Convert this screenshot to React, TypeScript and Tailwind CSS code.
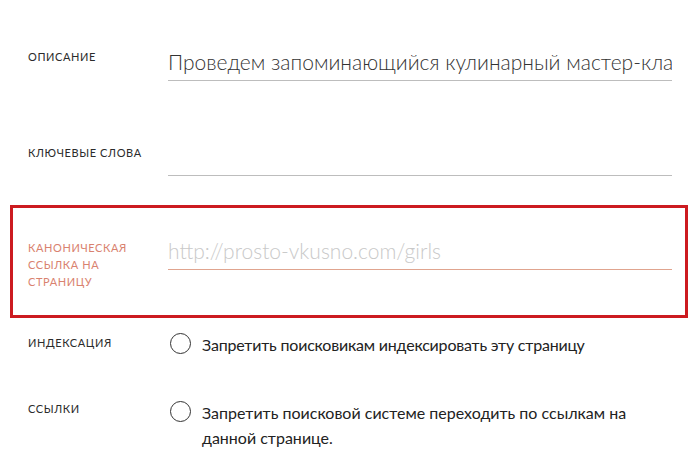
const LABEL =
  "font-['Lato',sans-serif] text-[11px] uppercase leading-[12px] tracking-[0.6px] text-[#2b2b2b] w-[140px] shrink-0";

function Radio() {
  return <span className="mt-[1px] h-[21px] w-[21px] shrink-0 rounded-full border-[1.5px] border-[#333]" />;
}

export default function App() {
  return (
    <div className="min-h-screen w-[698px] overflow-hidden bg-white font-['Lato',sans-serif]">
      {/* Описание */}
      <div className="flex pl-7 pt-[48px]">
        <div className={`${LABEL} mt-[3px]`}>Описание</div>
        <div className="h-[33px] w-[504px] overflow-hidden whitespace-nowrap border-b border-[#bdbdbd] text-[21px] font-light leading-[28px] text-[#333]">
          Проведем запоминающийся кулинарный мастер-класс для девочек
        </div>
      </div>

      {/* Ключевые слова */}
      <div className="flex pl-7 pt-[62px]">
        <div className={`${LABEL} mt-[4px]`}>Ключевые слова</div>
        <div className="h-[33px] w-[504px] border-b border-[#bdbdbd]" />
      </div>

      {/* Каноническая ссылка */}
      <div className="ml-[10px] mt-[29px] h-[113px] w-[678px] border-[3px] border-[#cc1b20] pl-[15px] pt-[29px]">
        <div className="flex">
          <div className="w-[140px] shrink-0 pt-[2px] text-[11px] uppercase leading-[17px] tracking-[0.6px] text-[#d9826f]">
            Каноническая
            <br />
            ссылка на
            <br />
            страницу
          </div>
          <div className="h-[33px] w-[504px] border-b border-[#e0a48f] text-[21px] font-light leading-[28px] text-[#c9c9c9]">
            http://prosto-vkusno.com/girls
          </div>
        </div>
      </div>

      {/* Индексация */}
      <div className="flex items-start pl-7 pt-[14px]">
        <div className={`${LABEL} mt-[5px]`}>Индексация</div>
        <div className="flex gap-[11px] pl-[2px]">
          <Radio />
          <span className="text-[16px] leading-[25px] tracking-[-0.2px] text-[#222]">
            Запретить поисковикам индексировать эту страницу
          </span>
        </div>
      </div>

      {/* Ссылки */}
      <div className="flex items-start pl-7 pt-[43px]">
        <div className={`${LABEL} mt-[3px]`}>Ссылки</div>
        <div className="flex gap-[11px] pl-[2px]">
          <Radio />
          <span className="w-[430px] text-[16px] leading-[25px] text-[#222]">
            Запретить поисковой системе переходить по ссылкам на данной странице.
          </span>
        </div>
      </div>
    </div>
  );
}
